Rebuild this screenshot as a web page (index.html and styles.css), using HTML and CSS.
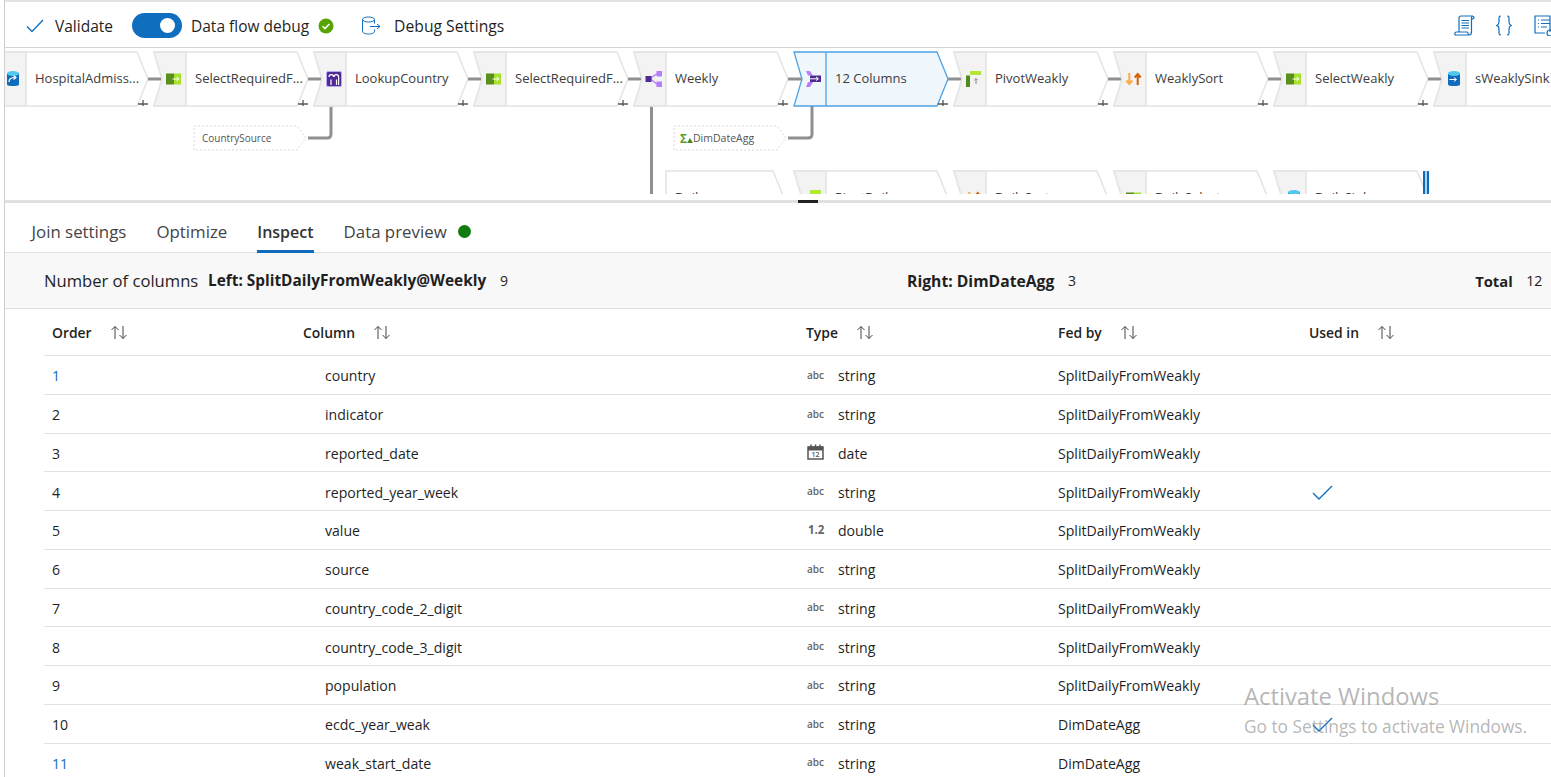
FILE: index.html

```html
<!DOCTYPE html>
<html lang="en">
<head>
  <meta charset="UTF-8">
  <title>Data flow - Inspect</title>
  <link rel="stylesheet" href="styles.css">
</head>
<body>
<div class="frame">
  <div class="toolbar">
    <svg class="ic-check" width="18" height="14" viewBox="0 0 18 14"><path d="M1 7.5l5 5L17 1"/></svg>
    <span class="tb-validate">Validate</span>
    <span class="toggle"><span class="knob"></span></span>
    <span class="tb-debug">Data flow debug</span>
    <svg class="ic-ok" width="16" height="16" viewBox="0 0 16 16"><circle cx="8" cy="8" r="7.5"/><path d="M4.6 8.2l2.4 2.4 4.4-4.6"/></svg>
    <svg class="ic-db" width="20" height="20" viewBox="0 0 20 20"><ellipse cx="7.5" cy="3.5" rx="6" ry="2.5"/><path d="M1.500 3.500v12c0 1.500 2.700 2.500 6 2.500s6-1 6-2.500v-2M13.500 3.500v4M9 10.500h10M16 8l3 2.500-3 2.500"/></svg>
    <span class="tb-settings">Debug Settings</span>
    <span class="tb-right">
      <svg class="ic-blue" width="21" height="21" viewBox="0 0 21 21"><path d="M5 17V3c0-1.200 .8-2 2-2h12c-1 0-1.500 1-1.500 2v14c0 1.500-1 3-2.500 3H2c-1 0-1.500-1-1-2 .3-.6 .8-1 1.500-1H13c.6 0 1 .6 1 1.500 0 .6 .4 1.500 1 1.500M18 1c1 0 2 .6 2 1.500S19 4 17.500 4M7.500 5.500h7.500M7.500 8h7.500M7.500 10.500h7.500M7.500 13h7.500"/></svg>
      <svg class="ic-blue ic-brace" width="18" height="21" viewBox="0 0 18 21"><path d="M6 1C3.500 1 4 3 4 6c0 3-.5 4.500-3 4.500 2.500 0 3 1.500 3 4.500 0 3-.5 5 2 5M12 1c2.500 0 2 2 2 5 0 3 .5 4.500 3 4.500-2.500 0-3 1.500-3 4.500 0 3 .5 5-2 5"/></svg>
      <svg class="ic-blue ic-list" width="17" height="21" viewBox="0 0 17 21"><path d="M16 17V1H1v17h10M4 5h1M7 5h9M4 8.500h1M7 8.500h9M4 12h1M7 12h6"/><circle cx="16" cy="18" r="3"/></svg>
    </span>
  </div>

  <div class="canvas">
    <svg width="1546" height="146" viewBox="5 48 1546 146">
      <defs>
        <g id="node">
          <path class="n-body" d="M0 52H143L154 79 143 106H0L8 79Z"/>
          <path class="n-icon" d="M0 52H32V106H0L8 79Z"/>
          <path class="n-plus" d="M149 100V106M144 104H154"/>
          <path class="n-link" d="M154 79H168"/>
        </g>
        <g id="i-select">
          <rect x="-7.500" y="-5.500" width="8" height="11" fill="#5a8f1f"/>
          <rect x=".5" y="-5.500" width="7" height="11" fill="#a9e22e"/>
          <path d="M-1 0H5M3 -2L5.500 0 3 2" fill="none" stroke="#fff" stroke-width="1"/>
        </g>
        <g id="i-cyl">
          <path d="M-6 -5.500V5.500C-6 7.500 6 7.500 6 5.500V-5.500Z" fill="#0f6cbd"/>
          <ellipse cy="-5.500" rx="6" ry="2.500" fill="#50c8f0"/>
        </g>
        <g id="i-pivot">
          <rect x="-3.500" y="-8" width="11" height="4" fill="#b0e834"/>
          <rect x="-7.500" y="-3.500" width="4" height="11.500" fill="#4e8a1e"/>
          <path d="M2.500 5V-.5M.8 1.200L2.500-.5 4.200 1.200" fill="none" stroke="#888" stroke-width="1"/>
        </g>
        <g id="i-sort">
          <path d="M-4.200 -6V4M-7.200 1.500L-4.200 5-1.200 1.500" fill="none" stroke="#ffaa44" stroke-width="2"/>
          <path d="M4.200 6V-4M1.200 -1.500L4.200 -5 7.200 -1.500" fill="none" stroke="#d95f00" stroke-width="2"/>
        </g>
      </defs>

      <!-- second row, cut off by the splitter -->
      <path class="n-body" d="M666 171H773L784 198 773 225H666Z"/>
      <use href="#node" x="794" y="119"/>
      <use href="#node" x="954" y="119"/>
      <use href="#node" x="1114" y="119"/>
      <use href="#node" x="1274" y="119"/>
      <use href="#i-pivot" x="813.500" y="198"/>
      <use href="#i-sort" x="973.500" y="198"/>
      <use href="#i-select" x="1133.500" y="198"/>
      <use href="#i-cyl" x="1294" y="198"/>
      <text class="n-text" x="675" y="202">Daily</text>
      <text class="n-text" x="835" y="202">PivotDaily</text>
      <text class="n-text" x="995" y="202">DailySort</text>
      <text class="n-text" x="1155" y="202">DailySelect</text>
      <text class="n-text" x="1315" y="202">DailySink</text>
      <path class="bar-a" d="M1423 171h6v25h-6z"/>
      <path class="bar-b" d="M1425 171h2v25h-2z"/>

      <!-- links to side streams -->
      <path class="n-link" d="M651.500 106V194"/>
      <path class="n-link" d="M308 138H327Q331 138 331 134V106"/>
      <path class="n-link" d="M788 138H808Q812 138 812 134V106"/>

      <!-- first row -->
      <use href="#node" x="-6"/>
      <use href="#node" x="154"/>
      <use href="#node" x="314"/>
      <use href="#node" x="474"/>
      <use href="#node" x="634"/>
      <path class="n-link" d="M948 79H968"/>
      <path class="n-sel" d="M794 52H937L948 79 937 106H794L802 79Z"/>
      <path class="n-sel-line" d="M826 52V106"/>
      <path class="n-plus" d="M943 100V106M938 104H948"/>
      <use href="#node" x="954"/>
      <use href="#node" x="1114"/>
      <use href="#node" x="1274"/>
      <use href="#node" x="1434"/>

      <use href="#i-cyl" x="13" y="79"/>
      <path d="M9 82C9 79 11 77.500 15 77.500M13.500 75.500L16 77.500 13.500 79.500" fill="none" stroke="#fff" stroke-width="1.200"/>
      <use href="#i-select" x="173.500" y="79"/>
      <rect x="326.500" y="71.500" width="15" height="15" rx="1.500" fill="#4f2a93" stroke="#b9a6f5"/>
      <path d="M331 85V79.500M336.500 85V79.500M329 77a2.300 2.300 0 1 1 4.600 0M334 77a2.300 2.300 0 1 1 4.600 0V85" fill="none" stroke="#fff" stroke-width="1.200"/>
      <use href="#i-select" x="493.500" y="79"/>
      <path d="M650 78.500L658 73M650 78.500L658 85" stroke="#b77efc" stroke-width="1.500" fill="none"/>
      <rect x="645.500" y="76" width="6" height="6" fill="#4f2a93"/>
      <rect x="656.500" y="71" width="5.500" height="5.500" fill="#b77efc"/>
      <rect x="656.500" y="81.500" width="5.500" height="5.500" fill="#b77efc"/>
      <path d="M806 71H810L813 75.500H808ZM806 87H810L813 82H808Z" fill="#b77efc"/>
      <path d="M810 75.500H821V82H810Z" fill="#4f2a93"/>
      <path d="M809 78.800H818M816 77L818.500 78.800 816 80.500" fill="none" stroke="#fff" stroke-width="1"/>
      <use href="#i-pivot" x="973.500" y="79"/>
      <use href="#i-sort" x="1133.500" y="79"/>
      <use href="#i-select" x="1293.500" y="79"/>
      <use href="#i-cyl" x="1454" y="79"/>
      <path d="M1449.500 79.500H1456M1454 77.500L1456.500 79.500 1454 81.500" fill="none" stroke="#fff" stroke-width="1"/>

      <text class="n-text" x="35" y="83">HospitalAdmiss...</text>
      <text class="n-text" x="195" y="83">SelectRequiredF...</text>
      <text class="n-text" x="355" y="83">LookupCountry</text>
      <text class="n-text" x="515" y="83">SelectRequiredF...</text>
      <text class="n-text" x="675" y="83">Weekly</text>
      <text class="n-text" x="835" y="83">12 Columns</text>
      <text class="n-text" x="995" y="83">PivotWeakly</text>
      <text class="n-text" x="1155" y="83">WeaklySort</text>
      <text class="n-text" x="1315" y="83">SelectWeakly</text>
      <text class="n-text" x="1475" y="83">sWeaklySink</text>

      <!-- side streams -->
      <path class="side" d="M194 126H297L306 138 297 150H194Z"/>
      <text class="side-text" x="202" y="142">CountrySource</text>
      <path class="side" d="M674 126H777L786 138 777 150H674Z"/>
      <text class="sigma" x="680" y="143">Σ</text>
      <path d="M687 143L690 138 693 143Z" fill="#4e8a1e"/>
      <text class="side-text side-wide" x="693" y="142">DimDateAgg</text>
    </svg>
  </div>
  <div class="splitter"><span class="handle"></span></div>

  <div class="tabs">
    <span class="tab">Join settings</span>
    <span class="tab">Optimize</span>
    <span class="tab active">Inspect</span>
    <span class="tab">Data preview</span>
    <span class="dot"></span>
  </div>

  <div class="summary">
    <span class="sum-label">Number of columns</span>
    <b class="sum-left">Left: SplitDailyFromWeakly@Weekly</b><span class="sum-n">9</span>
    <b class="sum-right">Right: DimDateAgg</b><span class="sum-n">3</span>
    <b class="sum-total">Total</b><span class="sum-n">12</span>
  </div>

  <svg class="hidden-defs" width="0" height="0">
    <defs>
      <g id="sort"><path d="M5 14V1.500M1.500 5L5 1.500 8.500 5M13 1V13.500M9.500 10L13 13.500 16.500 10"/></g>
      <g id="tick"><path d="M1 8l6 6L20 1"/></g>
    </defs>
  </svg>

  <div class="grid">
    <div class="row head">
      <div>Order<svg class="sort" width="18" height="15"><use href="#sort"/></svg></div>
      <div>Column<svg class="sort" width="18" height="15"><use href="#sort"/></svg></div>
      <div>Type<svg class="sort" width="18" height="15"><use href="#sort"/></svg></div>
      <div>Fed by<svg class="sort" width="18" height="15"><use href="#sort"/></svg></div>
      <div>Used in<svg class="sort" width="18" height="15"><use href="#sort"/></svg></div>
    </div>
    <div class="row">
      <div class="num link">1</div><div class="col">country</div>
      <div><span class="ty">abc</span>string</div><div>SplitDailyFromWeakly</div><div></div>
    </div>
    <div class="row">
      <div class="num">2</div><div class="col">indicator</div>
      <div><span class="ty">abc</span>string</div><div>SplitDailyFromWeakly</div><div></div>
    </div>
    <div class="row">
      <div class="num">3</div><div class="col">reported_date</div>
      <div><span class="ty"><svg class="cal" width="17" height="16" viewBox="0 0 17 16"><path class="cal-top" d="M1 2.500h15v4H1z"/><path d="M1 3h15v12H1zM4 .5v3M8.500 .5v3M13 .5v3"/><text class="cal-num" x="8.500" y="13">12</text></svg></span>date</div><div>SplitDailyFromWeakly</div><div></div>
    </div>
    <div class="row">
      <div class="num">4</div><div class="col">reported_year_week</div>
      <div><span class="ty">abc</span>string</div><div>SplitDailyFromWeakly</div>
      <div><svg class="tick" width="21" height="15"><use href="#tick"/></svg></div>
    </div>
    <div class="row">
      <div class="num">5</div><div class="col">value</div>
      <div><span class="ty num-ty">1.2</span>double</div><div>SplitDailyFromWeakly</div><div></div>
    </div>
    <div class="row">
      <div class="num">6</div><div class="col">source</div>
      <div><span class="ty">abc</span>string</div><div>SplitDailyFromWeakly</div><div></div>
    </div>
    <div class="row">
      <div class="num">7</div><div class="col">country_code_2_digit</div>
      <div><span class="ty">abc</span>string</div><div>SplitDailyFromWeakly</div><div></div>
    </div>
    <div class="row">
      <div class="num">8</div><div class="col">country_code_3_digit</div>
      <div><span class="ty">abc</span>string</div><div>SplitDailyFromWeakly</div><div></div>
    </div>
    <div class="row">
      <div class="num">9</div><div class="col">population</div>
      <div><span class="ty">abc</span>string</div><div>SplitDailyFromWeakly</div><div></div>
    </div>
    <div class="row">
      <div class="num">10</div><div class="col">ecdc_year_weak</div>
      <div><span class="ty">abc</span>string</div><div>DimDateAgg</div>
      <div><svg class="tick" width="21" height="15"><use href="#tick"/></svg></div>
    </div>
    <div class="row">
      <div class="num link">11</div><div class="col">weak_start_date</div>
      <div><span class="ty">abc</span>string</div><div>DimDateAgg</div><div></div>
    </div>
  </div>
</div>

<div class="activate">
  <div class="act-1">Activate Windows</div>
  <div class="act-2">Go to Settings to activate Windows.</div>
</div>
</body>
</html>
```

FILE: styles.css

```css
html, body {
  margin: 0;
  height: 777px;
  overflow: hidden;
  background: #fff;
}
body {
  font-family: "Open Sans", "Noto Sans", sans-serif;
  font-size: 14.1px;
  color: #1f1f1f;
  position: relative;
}
.frame {
  margin-left: 4px;
  border-left: 1px solid #cfcfcf;
}

/* toolbar */
.toolbar {
  display: flex;
  align-items: center;
  height: 43px;
  padding-top: 2px;
  border-top: 2px solid #e3e3e3;
  border-bottom: 1px solid #d4d4d4;
  font-size: 15.5px;
}
.ic-check { margin-left: 21px; fill: none; stroke: #106ebe; stroke-width: 1.3; }
.tb-validate { margin-left: 11px; width: 57px; }
.toggle {
  margin-left: 20px;
  width: 50px;
  height: 25px;
  flex: none;
  border-radius: 13px;
  background: #106ebe;
  display: flex;
  align-items: center;
  justify-content: flex-end;
  padding-right: 7px;
  box-sizing: border-box;
}
.knob { width: 15px; height: 15px; border-radius: 50%; background: #fff; }
.tb-debug { margin-left: 9px; }
.ic-ok { margin-left: 9px; }
.ic-ok circle { fill: #57a300; }
.ic-ok path { fill: none; stroke: #fff; stroke-width: 1.6; }
.ic-db { margin-left: 27px; fill: none; stroke: #106ebe; stroke-width: 1; }
.tb-settings { margin-left: 13px; font-size: 15.7px; }
.tb-right { margin-left: auto; display: flex; align-items: center; }
.ic-blue { fill: none; stroke: #106ebe; stroke-width: 1.2; margin-right: 20px; }
.ic-brace { margin-right: 21px; }
.ic-list { margin-right: 0; }

/* canvas */
.canvas { height: 152px; }
.canvas svg { display: block; }
.n-body { fill: #fff; stroke: #e4e4e4; stroke-width: 1.5; }
.n-icon { fill: #f3f3f3; stroke: #e4e4e4; stroke-width: 1.5; }
.n-plus { fill: none; stroke: #555; stroke-width: 1.3; }
.n-link { fill: none; stroke: #8f8f8f; stroke-width: 3; }
.n-sel { fill: #eff6fc; stroke: #4ea3e4; stroke-width: 1.3; }
.n-sel-line { stroke: #4ea3e4; stroke-width: 1.3; }
.n-text { font-size: 13px; fill: #3c3c3c; }
.side { fill: #fff; stroke: #d8d8d8; stroke-dasharray: 2 2; }
.side-text { font-size: 10px; fill: #555; }
.side-wide { font-size: 10.5px; }
.sigma { font-size: 12px; font-weight: 700; fill: #5d9c22; }
.bar-a { fill: #0f6cbd; }
.bar-b { fill: #a9d3f2; }

.splitter { height: 3px; background: #e1e1e1; }
.handle { display: block; width: 20px; height: 3px; margin-left: 793px; background: #222; }

/* tabs */
.tabs {
  display: flex;
  height: 49px;
  padding-left: 26.500px;
  gap: 30px;
  font-size: 16.85px;
  color: #444;
  border-bottom: 1px solid #e1e1e1;
}
.tab { height: 50px; line-height: 58px; box-sizing: border-box; }
.tab.active {
  font-size: 16px;
  font-weight: 600;
  color: #333;
  border-bottom: 3px solid #0f6cbd;
}
.dot {
  width: 13px;
  height: 13px;
  border-radius: 50%;
  background: #107c10;
  margin-left: -19px;
  margin-top: 22px;
}

/* summary */
.summary {
  display: flex;
  align-items: center;
  height: 55px;
  padding-left: 39px;
  background: #f8f8f8;
  border-bottom: 1px solid #e1e1e1;
  font-size: 14.1px;
}
.summary > * { flex: none; }
.sum-label { font-size: 16.6px; width: 164px; }
.sum-left { width: 292px; font-size: 15.4px; }
.sum-right { margin-left: 399px; width: 161px; font-size: 15.7px; }
.sum-total { margin-left: 399px; width: 51px; font-size: 14.800px; }
.summary b { font-weight: 700; }

.hidden-defs { position: absolute; }

/* table */
.grid { margin-left: 39px; }
.row {
  display: grid;
  grid-template-columns: 251px 503px 252px 251px 1fr;
  height: 38.75px;
  padding-top: 2px;
  box-sizing: border-box;
  border-bottom: 1px solid #e1e1e1;
  align-items: center;
}
.row > div { padding-left: 8px; display: flex; align-items: center; }
.row.head { height: 47.05px; padding-top: 0; font-weight: 600; font-size: 13.9px; }
.row > .col { padding-left: 30px; }
.link { color: #106ebe; }
.ty {
  width: 31px;
  padding-left: 1px;
  flex: none;
  font-size: 10px;
  font-weight: 600;
  color: #666;
  margin-top: -2px;
}
.num-ty { font-size: 11.500px; padding-left: 2px; width: 30px; font-weight: 700; }
.sort { margin-left: 18px; fill: none; stroke: #444; stroke-width: 1; }
.cal { fill: none; stroke: #555; stroke-width: 1.500; display: block; }
.cal-top { fill: #555; stroke: none; }
.cal-num { font-size: 7px; font-weight: 600; fill: #555; stroke: none; text-anchor: middle; }
.tick { margin-left: 3px; fill: none; stroke: #106ebe; stroke-width: 1.400; }

/* windows watermark */
.activate {
  position: absolute;
  left: 1244px;
  top: 680px;
  color: rgba(120, 120, 120, .55);
}
.act-1 { font-size: 23.8px; line-height: 32px; }
.act-2 { font-size: 17.3px; line-height: 26px; margin-top: 2px; }
```
